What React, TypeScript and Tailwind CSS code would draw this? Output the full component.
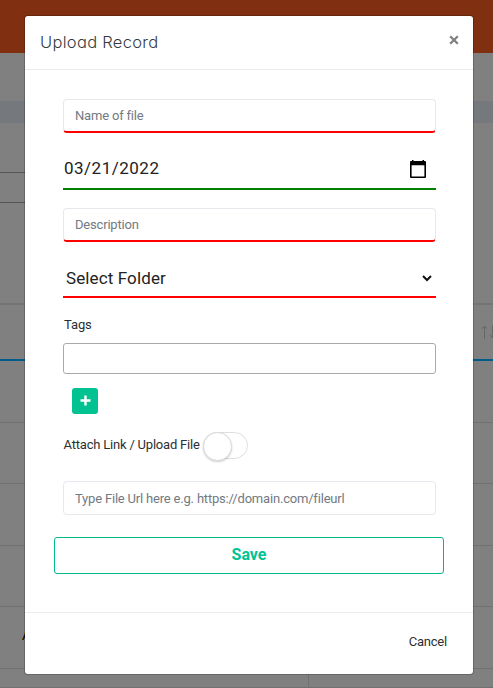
import React from "react";

function Field({ label, invalid, className }: { label: string; invalid?: boolean; className: string }) {
  return (
    <input
      type="text"
      placeholder={label}
      className={`block h-[34px] w-[373px] shrink-0 rounded-[4px] border border-[#e5e9ee] bg-white px-[11px] text-[13px] tracking-[-0.19px] text-[#495057] outline-none placeholder:text-[#727a82] ${
        invalid ? "border-b-2 border-b-[#ff0000]" : ""
      } ${className}`}
    />
  );
}

function PageBehind() {
  return (
    <div className="flex h-full flex-col bg-[#808080]">
      <div className="h-[53px] shrink-0 bg-[#803010]" />
      <div className="h-12 shrink-0" />
      <div className="h-[22px] shrink-0 bg-[#75787c]" />
      <div className="h-[49px] shrink-0" />
      <div className="flex h-[31px] shrink-0">
        <div className="w-[200px] border-y border-[#555555]" />
      </div>
      <div className="h-[100px] shrink-0" />
      <div className="flex h-[58px] shrink-0 items-center justify-end border-t-2 border-b-2 border-t-[#747474] border-b-[#005b8a]">
        <svg width="13" height="14" viewBox="0 0 13 14" fill="none" stroke="#686868" strokeWidth="1">
          <path d="M4.5 14V1M2 3.8L4.5 1L7 3.8" />
          <path d="M12.5 0V13M10 10L12.5 13" />
        </svg>
      </div>
      <div className="h-[62px] shrink-0 border-b border-[#717171]" />
      <div className="h-[61px] shrink-0 border-b border-[#717171]" />
      <div className="h-[62px] shrink-0 border-b border-[#717171]" />
      <div className="h-[61px] shrink-0 border-b border-[#717171]" />
      <div className="flex h-[62px] shrink-0 items-center border-b border-[#717171] pl-[22px] text-[13px] text-black">
        <span className="pb-1">A</span>
      </div>
      <div className="flex h-[19px] shrink-0 border-b border-[#717171]">
        <div className="w-[309px] border-r border-[#717171]" />
      </div>
    </div>
  );
}

export default function App() {
  return (
    <div className="relative h-[688px] w-[493px] overflow-hidden font-['Roboto',sans-serif] text-[13px] tracking-[-0.2px] text-[#2b2f33]">
      <PageBehind />
      <div
        role="dialog"
        className="absolute top-4 left-[25px] flex h-[658px] w-[448px] flex-col rounded-[3px] bg-white shadow-[0_0_0_1px_rgba(0,0,0,0.2)]"
      >
        <header className="flex h-[54px] shrink-0 justify-between border-b border-[#e9ebed] pr-[14px] pl-[15px]">
          <h5 className="pt-[14px] font-['Inter',sans-serif] text-[16.5px] leading-6 font-light tracking-[0.3px] text-[#343a40] [font-feature-settings:'cv11']">
            Upload Record
          </h5>
          <button className="flex h-[47px] w-[10px] items-center justify-center" aria-label="Close">
            <svg width="10" height="10" viewBox="0 0 10 10" stroke="#7f7f7f" strokeWidth="2.2">
              <path d="M1.2 1.2L8.8 8.8M8.8 1.2L1.2 8.8" />
            </svg>
          </button>
        </header>

        <main className="flex flex-1 flex-col px-[38px] pt-[29px]">
          <Field label="Name of file" invalid className="" />

          <div className="mt-[15px] flex h-[42px] w-[373px] shrink-0 items-center justify-between border-b-2 border-[#008000] pr-[9px] pl-[1px]">
            <span className="pt-[2px] text-[17px] tracking-[0.5px] text-[#222222]">03/21/2022</span>
            <svg className="mt-px" width="18" height="20" viewBox="0 0 18 20">
              <path
                fill="#000000"
                fillRule="evenodd"
                d="M3 1h1.5v1h9V1H15v1h1q1 0 1 1v15q0 1-1 1H2q-1 0-1-1V3q0-1 1-1h1zM2.6 6.3v11.2h12.8V6.3z"
              />
            </svg>
          </div>

          <Field label="Description" invalid className="mt-[18px]" />

          <div className="mt-[15px] flex h-[41px] w-[373px] shrink-0 items-center justify-between border-b-2 border-[#ff0000] pt-[3px] pr-1 pl-[3px]">
            <span className="pt-[2px] text-[17px] tracking-[0.12px] text-[#222222]">Select Folder</span>
            <svg width="10" height="7" viewBox="0 0 10 7" fill="none" stroke="#111111" strokeWidth="2">
              <path d="M1 1L5 5L9 1" />
            </svg>
          </div>

          <label className="mt-[17px] h-5 shrink-0 pl-px leading-5 tracking-[-0.1px]">Tags</label>
          <div className="mt-2 h-[31px] w-[373px] shrink-0 rounded-[3px] border border-[#aaaaaa]" />

          <button className="mt-[14px] ml-[9px] flex h-[26px] w-[26px] shrink-0 items-center justify-center rounded-[3px] bg-[#02c292] pb-[2px]">
            <svg width="11" height="11" viewBox="0 0 11 11" stroke="#ffffff" strokeWidth="2.4">
              <path d="M5.5 0.5V10.5M0.5 5.5H10.5" />
            </svg>
          </button>

          <div className="mt-[18px] flex h-[27px] shrink-0 items-center">
            <span className="w-[140px] pb-[2px] pl-[0.5px] whitespace-nowrap">Attach Link / Upload File</span>
            <div className="h-[27px] w-[45px] rounded-full border border-[#dfdfdf]">
              <div className="-mt-px -ml-px h-[29px] w-[29px] rounded-full border border-[#dcdcdc] bg-white shadow-[0_1px_2px_rgba(0,0,0,0.2)]" />
            </div>
          </div>

          <Field label="Type File Url here e.g. https://domain.com/fileurl" className="mt-[22px]" />

          <button className="-mx-[9px] mt-[22px] h-[37px] w-[390px] shrink-0 rounded-[3px] border border-[#02b98b] pb-[2px] text-[16px] font-bold tracking-normal text-[#02c292]">
            Save
          </button>
        </main>

        <footer className="flex h-[62px] shrink-0 items-center justify-end border-t border-[#e9ebed] pr-[26px]">
          <button className="pb-1">Cancel</button>
        </footer>
      </div>
    </div>
  );
}
